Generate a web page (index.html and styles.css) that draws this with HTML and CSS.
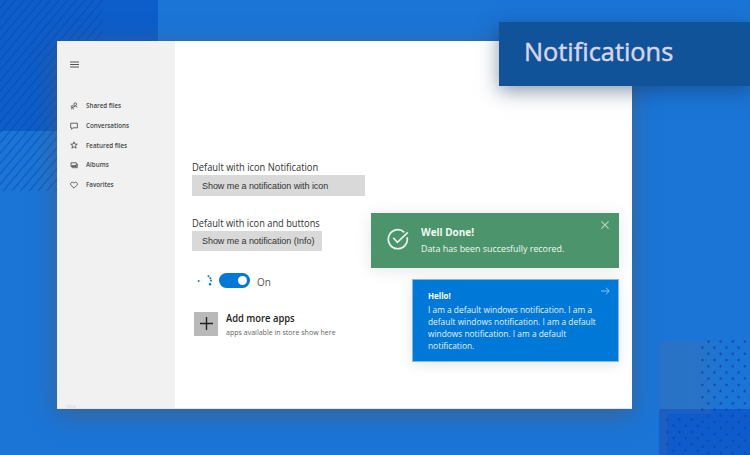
FILE: index.html
```html
<!DOCTYPE html>
<html lang="en">
<head>
<meta charset="utf-8">
<title>Notifications</title>
<link rel="stylesheet" href="styles.css">
</head>
<body>
<svg class="backdrop" width="750" height="455" aria-hidden="true">
  <defs>
    <pattern id="hatch" width="8.7" height="10" patternUnits="userSpaceOnUse" patternTransform="skewX(-40)">
      <rect x="6" width="1.8" height="10" fill="#0a46ac" opacity=".5"/>
    </pattern>
    <pattern id="dots" x="702" y="340" width="12.1" height="12.4" patternUnits="userSpaceOnUse">
      <circle cx="6.5" cy="1.5" r="1.2"/>
      <circle cx="0.4" cy="7.7" r="1.2"/>
      <circle cx="12.5" cy="7.7" r="1.2"/>
    </pattern>
    <pattern id="dots-low" x="661" y="418" width="12.1" height="12.4" patternUnits="userSpaceOnUse">
      <circle cx="6.3" cy="1.5" r="1.3"/>
      <circle cx="0.5" cy="7.7" r="1.3"/>
      <circle cx="12.6" cy="7.7" r="1.3"/>
    </pattern>
    <linearGradient id="fade"><stop stop-color="#2a72c5"/><stop offset=".45" stop-color="#2873c8"/><stop offset=".75" stop-color="#1b75d6"/></linearGradient>
  </defs>
  <rect width="158" height="131" fill="#0d5dca"/>
  <rect width="103" height="191" fill="url(#hatch)"/>
  <rect x="659" y="341" width="91" height="68" fill="url(#fade)"/>
  <rect x="659" y="409" width="91" height="46" fill="#1d5ec1"/>
  <rect x="667" y="414" width="83" height="41" fill="#0e5ccb"/>
  <rect x="711" y="409" width="39" height="46" fill="#0e5ccb"/>
  <rect x="700" y="340" width="50" height="115" fill="url(#dots)"/>
  <rect x="665" y="417" width="35" height="38" fill="url(#dots-low)"/>
</svg>
<main class="window">
  <nav class="sidebar">
    <svg class="menu" viewBox="0 0 9 7"><path d="M0 1h9M0 3.5h9M0 6h9"/></svg>
    <ul class="links">
      <li><svg viewBox="0 0 8 8"><circle cx="5.2" cy="2.2" r="1.4"/><path d="M3.2 5.3Q5.5 2.8 7.3 5.2M.8 7.5Q2.2 4.7 4 7.2"/><circle cx="2.2" cy="4.6" r="1"/></svg><span>Shared files</span></li>
      <li><svg viewBox="0 0 8 8"><path d="M.7 1.2h6.7v4.6H3L1.6 7.2V5.8H.7z"/></svg><span>Conversations</span></li>
      <li><svg viewBox="0 0 8 8"><path d="M4 .8 4.9 3.1 7.3 3.2 5.4 4.8 6.1 7.2 4 5.8 1.9 7.2 2.6 4.8.7 3.2 3.1 3.1z"/></svg><span>Featured files</span></li>
      <li><svg viewBox="0 0 8 8"><path d="M1 1.8h5.3v3.7H1zM1.7 6.7h5.6V2.8M1.5 4.6h4.5"/></svg><span>Albums</span></li>
      <li><svg viewBox="0 0 8 8"><path d="M4 7.2.9 4.1C-.4 2.2 2.2-.1 4 2.2 5.8-.1 8.4 2.2 7.1 4.1z"/></svg><span>Favorites</span></li>
    </ul>
    <i class="grip"></i>
  </nav>
  <section class="content">
    <h2 class="label"><span>Default with icon Notification</span></h2>
    <button class="btn wide">Show me a notification with icon</button>
    <h2 class="label second"><span>Default with icon and buttons</span></h2>
    <button class="btn">Show me a notification (Info)</button>
    <div class="toggle-row">
      <svg class="spinner" viewBox="0 0 18 14"><circle cx="1.7" cy="7" r="1"/><circle cx="11.5" cy="2.2" r="1"/><circle cx="13.3" cy="4.2" r="1"/><circle cx="14" cy="6.5" r="1"/><circle cx="13" cy="10.3" r="1.2"/></svg>
      <span class="switch"><i></i></span><span class="on">On</span>
    </div>
    <div class="apps">
      <span class="plus"><svg viewBox="0 0 24 24"><path d="M6 11.5h13M12.5 5v13"/></svg></span>
      <div><h3><span>Add more apps</span></h3><p><span>apps available in store show here</span></p></div>
    </div>
  </section>
</main>
<aside class="success">
  <svg class="check" viewBox="0 0 22 22"><path d="M17.3 4.3A9.5 9.5 0 1 0 20.1 9.2M6.2 9.7l4.2 4.6L20.8 4.4"/></svg>
  <div><h3><span>Well Done!</span></h3><p><span>Data has been succesfully recored.</span></p></div>
  <svg class="close" viewBox="0 0 8 8"><path d="M.4.4l7.2 7.2M7.6.4.4 7.6"/></svg>
</aside>
<aside class="info">
  <div><h3><span>Hello!</span></h3><p><span>I am a default windows notification. I am a<br>default windows notification. I am a default<br>windows notification. I am a default<br>notification.</span></p></div>
  <svg class="arrow" viewBox="0 0 9 8"><path d="M0 4h8M5 .8 8.3 4 5 7.2"/></svg>
</aside>
<header class="banner"><h1><span>Notifications</span></h1></header>
</body>
</html>
```
FILE: styles.css
```css
* { box-sizing: border-box; }
body { margin: 0; width: 750px; height: 455px; overflow: hidden; position: relative; background: #1b75d6; font-family: "Open Sans", "Noto Sans", sans-serif; color: #333; }
h1, h2, h3, p, ul { margin: 0; padding: 0; font-weight: 400; }
span { display: inline-block; white-space: nowrap; transform-origin: left center; }
svg { fill: none; display: block; }
.backdrop { position: absolute; left: 0; top: 0; }
pattern circle { fill: #0c48b0; }
.window { position: relative; margin: 41px 0 0 57px; width: 575px; height: 368px; display: flex; background: #fff; border-bottom: 1px solid #e4e7ea; box-shadow: 0 5px 22px rgba(75, 90, 110, .7); }
.sidebar { width: 118px; background: #f1f1f1; padding: 20px 13px 0; display: flex; flex-direction: column; }
.menu { width: 9px; height: 7px; stroke: #555; stroke-width: 1; }
.links { list-style: none; margin-top: 28px; }
.links li { display: flex; align-items: center; height: 19.7px; gap: 8px; font-size: 6.6px; font-weight: 600; color: #444; }
.links span { transform: scaleX(.945); }
.links svg { width: 8px; height: 8px; stroke: #444; stroke-width: .8; }
.grip { width: 10px; height: 3px; margin: auto 0 0 -4px; background: #e5e9ee; }
.content { padding: 119px 0 0 17px; }
.label { font-size: 10.5px; line-height: 15px; }
.label span { transform: scaleX(.888); }
.label.second { margin-top: 20px; }
.label.second span { transform: scaleX(.882); }
.btn { display: flex; align-items: center; height: 20.5px; width: 130px; padding: 1px 0 0 10px; border: 0; background: #d9d9d9; color: #333; font: 9px "Liberation Sans", sans-serif; letter-spacing: -.06px; white-space: nowrap; }
.btn.wide { width: 173px; }
.toggle-row { display: flex; align-items: center; margin-top: 21px; height: 17px; padding-left: 5px; }
.spinner { width: 18px; height: 14px; fill: #0078d7; }
.switch { width: 31px; height: 15px; margin-left: 4px; border-radius: 8px; background: #0078d7; padding: 3px; display: flex; justify-content: flex-end; }
.switch i { width: 9px; height: 9px; border-radius: 50%; background: #fff; }
.on { margin-left: 6.5px; font-size: 10.5px; padding-top: 2px; color: #555; transform: scaleX(.95); }
.apps { display: flex; margin: 23px 0 0 2px; gap: 8px; }
.plus { width: 24px; height: 24px; background: #b9b9b9; }
.plus svg { stroke: #222; stroke-width: 1.4; }
.apps h3 { font-size: 10.5px; line-height: 13px; font-weight: 600; color: #222; }
.apps h3 span { transform: scaleX(.895); }
.apps p { font-size: 7.3px; line-height: 15px; color: #666; }
.apps p span { transform: scaleX(.967); }
.success { position: absolute; left: 371px; top: 213px; width: 248px; height: 55px; padding: 12px 10px 0 16px; display: flex; background: #4c946c; color: #f1faf4; box-shadow: 0 2px 16px rgba(0, 0, 0, .1); }
.check { width: 22px; height: 22px; margin: 3px 12px 0 0; stroke: #e8f3ec; stroke-width: 1.7; }
.success h3 { font-size: 10.5px; line-height: 15px; font-weight: 700; }
.success h3 span { transform: scaleX(.95); }
.success p { font-size: 9px; line-height: 18px; }
.success p span { transform: scaleX(.985); }
.close { width: 8px; height: 8px; margin: -4px 0 0 auto; stroke: #b4d3c0; stroke-width: 1.2; }
.info { position: absolute; left: 412px; top: 279px; width: 207px; height: 83px; padding: 10px 8px 0 15px; display: flex; border: 1px solid #7fb9e8; background: #0078d7; color: #e4f1fc; box-shadow: 0 3px 12px rgba(0, 0, 0, .1); }
.info > div { width: 172px; }
.info h3 { margin-left: -.5px; font-size: 8.5px; line-height: 12px; font-weight: 700; color: #fff; }
.info h3 span { transform: scaleX(.93); }
.info p { margin-left: -.5px; font-size: 8.6px; line-height: 11.9px; padding-top: 3px; }
.info p span { transform: scaleX(.972); }
.arrow { flex: none; width: 9px; height: 8px; margin: -3px 0 0 auto; stroke: #9ccaf1; stroke-width: .9; }
.banner { position: absolute; left: 499px; top: 22px; width: 251px; height: 64px; padding-left: 25px; background: #105398; color: #d5d5ea; box-shadow: 0 5px 18px rgba(20, 50, 90, .5); }
.banner h1 { font-size: 26px; line-height: 59px; font-weight: 400; -webkit-text-stroke: .5px #d5d5ea; }
.banner h1 span { transform: scaleX(.975); }
```
